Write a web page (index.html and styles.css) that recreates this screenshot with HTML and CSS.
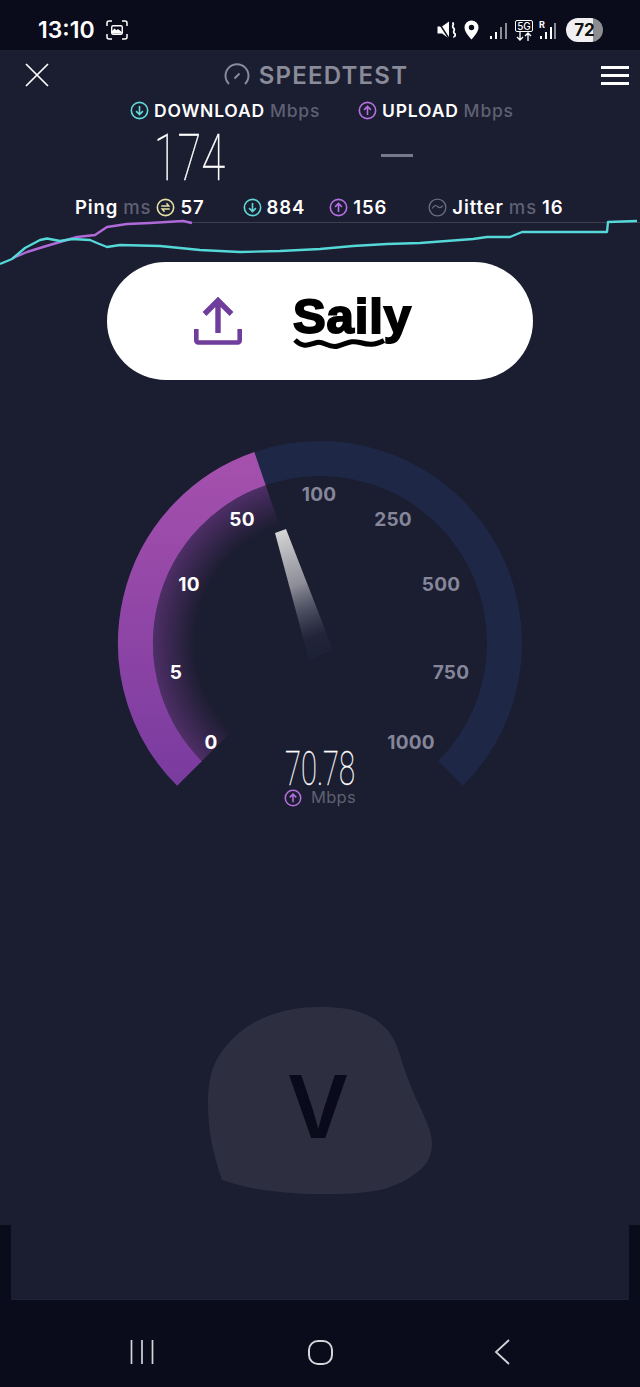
FILE: index.html
```html
<!DOCTYPE html>
<html>
<head>
    <title>Speedtest</title>
    <link rel="stylesheet" href="styles.css">
</head>
<body>
    <svg class="sprite">
        <symbol id="ic-down" viewBox="0 0 20 20">
            <circle cx="10" cy="10" r="8.6" fill="none" stroke="currentColor" stroke-width="1.7"/>
            <path d="M10 5.2v9M6.4 10.7l3.6 3.6 3.6-3.6" fill="none" stroke="currentColor" stroke-width="1.7"/>
        </symbol>
        <symbol id="ic-up" viewBox="0 0 20 20">
            <circle cx="10" cy="10" r="8.6" fill="none" stroke="currentColor" stroke-width="1.7"/>
            <path d="M10 14.8v-9M6.4 9.3L10 5.7l3.6 3.6" fill="none" stroke="currentColor" stroke-width="1.7"/>
        </symbol>
    </svg>

    <div class="status">
        <div class="status-left">
            <span class="clock">13:10</span>
            <svg class="shot" viewBox="0 0 22 20" width="22" height="20">
                <path d="M1 6V3a2 2 0 0 1 2-2h3M16 1h3a2 2 0 0 1 2 2v3M21 14v3a2 2 0 0 1-2 2h-3M6 19H3a2 2 0 0 1-2-2v-3" fill="none" stroke="#fff" stroke-width="1.5"/>
                <rect x="5.700" y="5.700" width="10.600" height="8.600" rx="1.500" fill="none" stroke="#fff" stroke-width="1.400"/>
                <path d="M6 13.500V11l2.500-2.500 2 1.700 1.500-1.200 3.800 3v1.500z" fill="#fff"/>
            </svg>
        </div>
        <div class="status-right">
            <svg viewBox="0 0 19 20" width="19" height="20">
                <path d="M0.500 6.500h4.500L12 1.500v17L5 13.500H0.500z" fill="#fff"/>
                <path d="M1 1.500l11 17" stroke="#0a0b1b" stroke-width="1.400"/>
                <path d="M15.500 2.500c2.500 2-1.500 3.500 1 5.500s-1.500 3.500 1 5.500-1 3-.5 4" fill="none" stroke="#fff" stroke-width="1.800"/>
            </svg>
            <svg class="pin" viewBox="0 0 15 20" width="15" height="20">
                <path fill-rule="evenodd" d="M7.500 0.500a7 7 0 0 1 7 7c0 4-4 8.500-7 12-3-3.500-7-8-7-12a7 7 0 0 1 7-7zm0 4.300a2.700 2.700 0 1 0 0 5.400 2.700 2.700 0 0 0 0-5.400z" fill="#fff"/>
            </svg>
            <svg class="bars" viewBox="0 0 17 17" width="17" height="17">
                <rect x="0" y="13" width="2" height="3" fill="#fff"/>
                <rect x="5" y="9" width="2" height="7" fill="#fff"/>
                <rect x="10" y="4" width="2" height="12" fill="#8c8d96"/>
                <rect x="15" y="0" width="2" height="16" fill="#8c8d96"/>
            </svg>
            <div class="net">
                <span class="net-5g">5G</span>
                <svg viewBox="0 0 18 9" width="18" height="9">
                    <path d="M5 0v8M2 5l3 3 3-3M13 9V1M10 4l3-3 3 3" fill="none" stroke="#fff" stroke-width="1.300"/>
                </svg>
            </div>
            <div class="roam">
                <span class="roam-r">R</span>
                <svg viewBox="0 0 17 17" width="17" height="17">
                    <rect x="1" y="13" width="2" height="3" fill="#fff"/>
                    <rect x="6" y="9" width="2" height="7" fill="#fff"/>
                    <rect x="11" y="4" width="2" height="12" fill="#fff"/>
                    <rect x="15" y="0" width="2" height="16" fill="#8c8d96"/>
                </svg>
            </div>
            <div class="battery">72</div>
        </div>
    </div>

    <div class="app">
        <div class="topbar">
            <svg class="close" viewBox="0 0 24 24" width="24" height="24">
                <path d="M1 1l22 22M23 1L1 23" stroke="#fff" stroke-width="1.700"/>
            </svg>
            <div class="brand">
                <svg viewBox="0 0 26 24" width="26" height="24">
                    <path d="M5 21a11.500 11.500 0 1 1 16 0" fill="none" stroke="currentColor" stroke-width="2"/>
                    <path d="M10.500 15.500l5-5" stroke="currentColor" stroke-width="2"/>
                </svg>
                <span>SPEEDTEST</span>
            </div>
            <div class="menu"><i></i><i></i><i></i></div>
        </div>

        <div class="heads">
            <div class="head head-down">
                <svg class="ic cyan"><use href="#ic-down"/></svg>
                <b>DOWNLOAD</b> <span class="unit">Mbps</span>
            </div>
            <div class="head head-up">
                <svg class="ic violet"><use href="#ic-up"/></svg>
                <b>UPLOAD</b> <span class="unit">Mbps</span>
            </div>
        </div>

        <div class="results">
            <div class="big-num">174</div>
            <div class="dash"></div>
        </div>

        <div class="pings">
            <b>Ping</b> <span class="unit unit-ms">ms</span>
            <svg class="ic cream" viewBox="0 0 20 20">
                <circle cx="10" cy="10" r="8.600" fill="none" stroke="currentColor" stroke-width="1.700"/>
                <path d="M5.500 8.500h8l-2.500-3M14.500 11.500h-8l2.500 3" fill="none" stroke="currentColor" stroke-width="1.600"/>
            </svg>
            <b class="val-ping">57</b>
            <svg class="ic cyan ic-dl"><use href="#ic-down"/></svg>
            <b class="val">884</b>
            <svg class="ic violet ic-ul"><use href="#ic-up"/></svg>
            <b class="val">156</b>
            <svg class="ic grey ic-jit" viewBox="0 0 20 20">
                <circle cx="10" cy="10" r="8.800" fill="none" stroke="currentColor" stroke-width="1.400"/>
                <path d="M4.500 11c2-4 4-3.500 5.500-2s3.500 2 5.500-1" fill="none" stroke="currentColor" stroke-width="1.300"/>
            </svg>
            <b>Jitter</b> <span class="unit unit-ms">ms</span> <b>16</b>
        </div>

        <svg class="graph" viewBox="0 218 640 44" width="640" height="44">
            <path d="M192 222.500H640" stroke="#3d3f50" stroke-width="1"/>
            <path d="M13 258L27 252 43 247 60 242 77 237 95 235 107 227 127 224 150 223 183 221 192 223" fill="none" stroke="#b06ad8" stroke-width="2.400" stroke-linejoin="round"/>
            <path d="M0 264L12 259 25 248 40 240 47 238.500 60 241 72 239 90 240 97 243 107 247 120 245 160 246 200 250 240 252 280 251 320 249 353 246 387 244 420 243 473 239 487 237 510 237 522 232 553 232 607 232 608 222 637 221" fill="none" stroke="#55d8d8" stroke-width="2.400" stroke-linejoin="round"/>
        </svg>

        <div class="pill">
            <svg viewBox="0 0 48 48" width="48" height="48">
                <path d="M24 3V36M10.500 17L24 3.500 37.500 17" fill="none" stroke="#6f3d9b" stroke-width="5.400"/>
                <path d="M2.300 32v11.500a2 2 0 0 0 2 2h39.400a2 2 0 0 0 2-2V32" fill="none" stroke="#6f3d9b" stroke-width="4.600"/>
            </svg>
            <div class="saily">
                <span>Saily</span>
                <svg viewBox="0 0 92 12" width="92" height="12">
                    <path d="M1 3c9 9 15 4 22 2.500s12 6 21 3.500 13-6 22-3.500 14 3 24-2" fill="none" stroke="#000" stroke-width="5"/>
                </svg>
            </div>
        </div>

        <svg class="gauge" viewBox="0 430 640 380" width="640" height="380">
            <defs>
                <linearGradient id="arc-fill" x1="0" y1="460" x2="0" y2="780" gradientUnits="userSpaceOnUse">
                    <stop offset="0" stop-color="#a550ad"/>
                    <stop offset="1" stop-color="#7a3b9f"/>
                </linearGradient>
                <radialGradient id="glow" cx="320" cy="643" r="168" gradientUnits="userSpaceOnUse">
                    <stop offset="0.74" stop-color="#7a3d95" stop-opacity="0"/>
                    <stop offset="1" stop-color="#7a3d95" stop-opacity="0.55"/>
                </radialGradient>
                <linearGradient id="needle" x1="280" y1="531" x2="322" y2="650" gradientUnits="userSpaceOnUse">
                    <stop offset="0" stop-color="#d6d6d6"/>
                    <stop offset="0.45" stop-color="#a9a9b2" stop-opacity="0.8"/>
                    <stop offset="0.75" stop-color="#5c5d72" stop-opacity="0.45"/>
                    <stop offset="0.88" stop-color="#2c3046" stop-opacity="0.4"/>
                    <stop offset="1" stop-color="#1f2a40" stop-opacity="0.4"/>
                </linearGradient>
            </defs>
            <path d="M189.500 773.500A184.500 184.500 0 1 1 450.500 773.500" fill="none" stroke="#1e2846" stroke-width="35"/>
            <path d="M320 643L201.900 761.100A167 167 0 0 1 265.600 485.100Z" fill="url(#glow)"/>
            <path d="M189.500 773.500A184.500 184.500 0 0 1 260 468.600" fill="none" stroke="url(#arc-fill)" stroke-width="35"/>
            <path d="M275 533L286 529 333 650 309 660Z" fill="url(#needle)"/>
            <g class="tick">
                <text x="211" y="749">0</text>
                <text x="176" y="679">5</text>
                <text x="189" y="591">10</text>
                <text x="242" y="526">50</text>
            </g>
            <g class="tick tick-off">
                <text x="319" y="501">100</text>
                <text x="393" y="526">250</text>
                <text x="441" y="591">500</text>
                <text x="451" y="679">750</text>
                <text x="411" y="749">1000</text>
            </g>
            <text class="live" x="285" y="785" textLength="70" lengthAdjust="spacingAndGlyphs">70.78</text>
            <use href="#ic-up" class="violet" x="284" y="789" width="18" height="18"/>
            <text class="live-unit" x="311" y="803">Mbps</text>
        </svg>

        <svg class="blob" viewBox="200 1000 240 200" width="240" height="200">
            <path d="M222 1180C212 1150 208 1130 208 1103 208 1080 212 1064 223 1050 236 1033 248 1025 263 1018 282 1010 300 1007 320 1007 340 1007 355 1009 367 1015 382 1022 391 1032 396 1044 400 1054 401 1058 402 1062 408 1080 413 1092 420 1107 426 1121 432 1132 432 1143 432 1155 428 1163 420 1170 408 1180 396 1186 380 1190 360 1194 340 1194 320 1194 295 1194 280 1192 263 1190 248 1188 235 1184 222 1180Z" fill="#2d2f40"/>
            <text x="287" y="1138" textLength="62" lengthAdjust="spacingAndGlyphs">V</text>
        </svg>

        <div class="spacer"></div>
        <div class="foot-wrap"><div class="foot"></div></div>
    </div>

    <div class="nav">
        <svg viewBox="0 0 24 24" width="24" height="24">
            <path d="M1.500 0v24M12 0v24M22.500 0v24" stroke="#d4d5da" stroke-width="1.700"/>
        </svg>
        <svg class="nav-home" viewBox="0 0 25 25" width="25" height="25">
            <rect x="1" y="1" width="23" height="23" rx="9" fill="none" stroke="#d4d5da" stroke-width="2"/>
        </svg>
        <svg viewBox="0 0 16 26" width="16" height="26">
            <path d="M15 1L2 13l13 12" fill="none" stroke="#d4d5da" stroke-width="1.800"/>
        </svg>
    </div>
</body>
</html>
```

FILE: styles.css
```css
body {
    margin: 0;
    width: 640px;
    min-height: 1387px;
    display: flex;
    flex-direction: column;
    background: #0a0b1b;
    color: #fff;
    font-family: Inter, 'Noto Sans', sans-serif;
    overflow: hidden;
}
.sprite {
    display: none;
}
.status {
    height: 50px;
    display: flex;
    justify-content: space-between;
    align-items: center;
    padding: 0 37px 0 38px;
    box-sizing: border-box;
    background: #0a0b1b;
}
.status-left {
    display: flex;
    align-items: center;
    gap: 11px;
    padding-top: 11px;
    margin-top: -1px;
}
.clock {
    font-size: 23px;
    font-weight: 600;
    line-height: 20px;
}
.status-right {
    display: flex;
    align-items: center;
    padding-top: 10px;
}
.pin {
    margin-left: 8px;
}
.bars {
    margin-left: 11px;
    margin-top: 2px;
}
.net {
    margin-left: 8px;
    display: flex;
    flex-direction: column;
    align-items: center;
    width: 18px;
}
.net-5g {
    font-size: 10px;
    font-weight: 500;
    line-height: 10px;
    border: 1px solid #fff;
    border-radius: 2px;
    padding: 0 1px;
}
.roam {
    position: relative;
    margin-left: 6px;
    width: 18px;
    height: 20px;
    display: flex;
    align-items: flex-end;
}
.roam-r {
    position: absolute;
    left: 0;
    top: 0;
    font-size: 9px;
    font-weight: 700;
    line-height: 9px;
}
.battery {
    margin-left: 9px;
    width: 37px;
    height: 24px;
    border-radius: 12px;
    background: linear-gradient(90deg, #f0f0f2 74%, #8d8d90 74%);
    color: #111;
    font-size: 17px;
    font-weight: 700;
    line-height: 24px;
    text-align: center;
}
.app {
    flex: 1;
    display: flex;
    flex-direction: column;
    background: #1b1d30;
}
.topbar {
    height: 50px;
    display: flex;
    align-items: center;
    justify-content: space-between;
    padding: 0 11px 0 25px;
}
.brand {
    display: flex;
    align-items: center;
    gap: 9px;
    color: #8a8b99;
    font-size: 24px;
    font-weight: 600;
    letter-spacing: 1.200px;
    margin-left: -18px;
}
.menu {
    width: 28px;
    display: flex;
    flex-direction: column;
    gap: 5px;
}
.menu i {
    height: 3px;
    background: #fff;
}
.ic {
    width: 19px;
    height: 19px;
    flex: none;
}
.cyan { color: #5fdad6; }
.violet { color: #b56fe0; }
.cream { color: #e6dfa6; }
.grey { color: #6b6c7c; }
.heads {
    height: 20px;
    display: flex;
    align-items: center;
    padding-left: 130px;
    font-size: 17.500px;
    letter-spacing: .8px;
}
.head {
    display: flex;
    align-items: center;
    gap: 5px;
}
.head b,
.pings b {
    font-weight: 600;
}
.head-up {
    margin-left: 38px;
}
.unit {
    color: #5f6072;
    font-weight: 500;
}
.results {
    height: 77px;
    display: flex;
    align-items: center;
}
.big-num {
    margin-left: 138px;
    width: 95px;
    font-family: Roboto, sans-serif;
    font-weight: 100;
    font-size: 65px;
    line-height: 77px;
    text-align: center;
    transform: scaleX(.67);
    -webkit-text-stroke: .3px #fff;
}
.dash {
    margin-left: 148px;
    width: 32px;
    height: 3px;
    background: #77788a;
    margin-top: -7px;
}
.pings {
    height: 20px;
    display: flex;
    align-items: center;
    padding-left: 75px;
    font-size: 18.500px;
    letter-spacing: .9px;
}
.unit-ms {
    margin-left: 5px;
}
.pings .cream {
    margin-left: 5px;
}
.val-ping {
    margin-left: 5px;
}
.ic-dl {
    margin-left: 38px;
}
.ic-ul {
    margin-left: 24px;
}
.val {
    margin-left: 5px;
}
.ic-jit {
    margin-left: 41px;
    margin-right: 5px;
}
.pings .unit-ms + b {
    margin-left: 5px;
}
.graph {
    display: block;
    margin-top: 1px;
    overflow: visible;
}
.pill {
    position: relative;
    width: 426px;
    height: 118px;
    margin-left: 107px;
    box-sizing: border-box;
    padding-left: 87px;
    display: flex;
    align-items: center;
    gap: 51px;
    border-radius: 59px;
    background: #fff;
}
.saily {
    position: relative;
    width: 120px;
    height: 60px;
}
.saily span {
    display: block;
    color: #000;
    font-family: 'Liberation Sans', Arial, sans-serif;
    font-weight: 700;
    font-size: 49px;
    letter-spacing: .9px;
    line-height: 50px;
    -webkit-text-stroke: 2px #000;
}
.saily svg {
    position: absolute;
    left: 1px;
    top: 46px;
    overflow: visible;
}
.gauge {
    display: block;
    margin-top: 50px;
}
.tick text {
    fill: #fff;
    font-size: 19px;
    font-weight: 700;
    letter-spacing: .2px;
    text-anchor: middle;
}
.tick-off text {
    fill: #85869a;
}
.live {
    fill: #fff;
    stroke: #fff;
    stroke-width: .3px;
    font-family: Roboto, sans-serif;
    font-weight: 100;
    font-size: 48px;
}
.live-unit {
    fill: #5f6072;
    font-size: 16.500px;
    font-weight: 400;
    letter-spacing: .3px;
}
.blob {
    display: block;
    margin: 190px auto 0;
}
.blob text {
    fill: #0a0a1a;
    font-size: 87px;
    font-weight: 600;
}
.spacer {
    flex: 1;
}
.foot-wrap {
    height: 75px;
    padding: 0 11px;
    background: #0a0b1b;
}
.foot {
    height: 75px;
    box-sizing: border-box;
    background: #1b1d30;
    border-bottom: 1px solid #20223a;
}
.nav {
    height: 87px;
    box-sizing: border-box;
    display: flex;
    justify-content: space-between;
    align-items: center;
    padding: 17px 130px 0;
    background: #0a0b1b;
}
.nav-home {
    margin-right: 7px;
}
```
